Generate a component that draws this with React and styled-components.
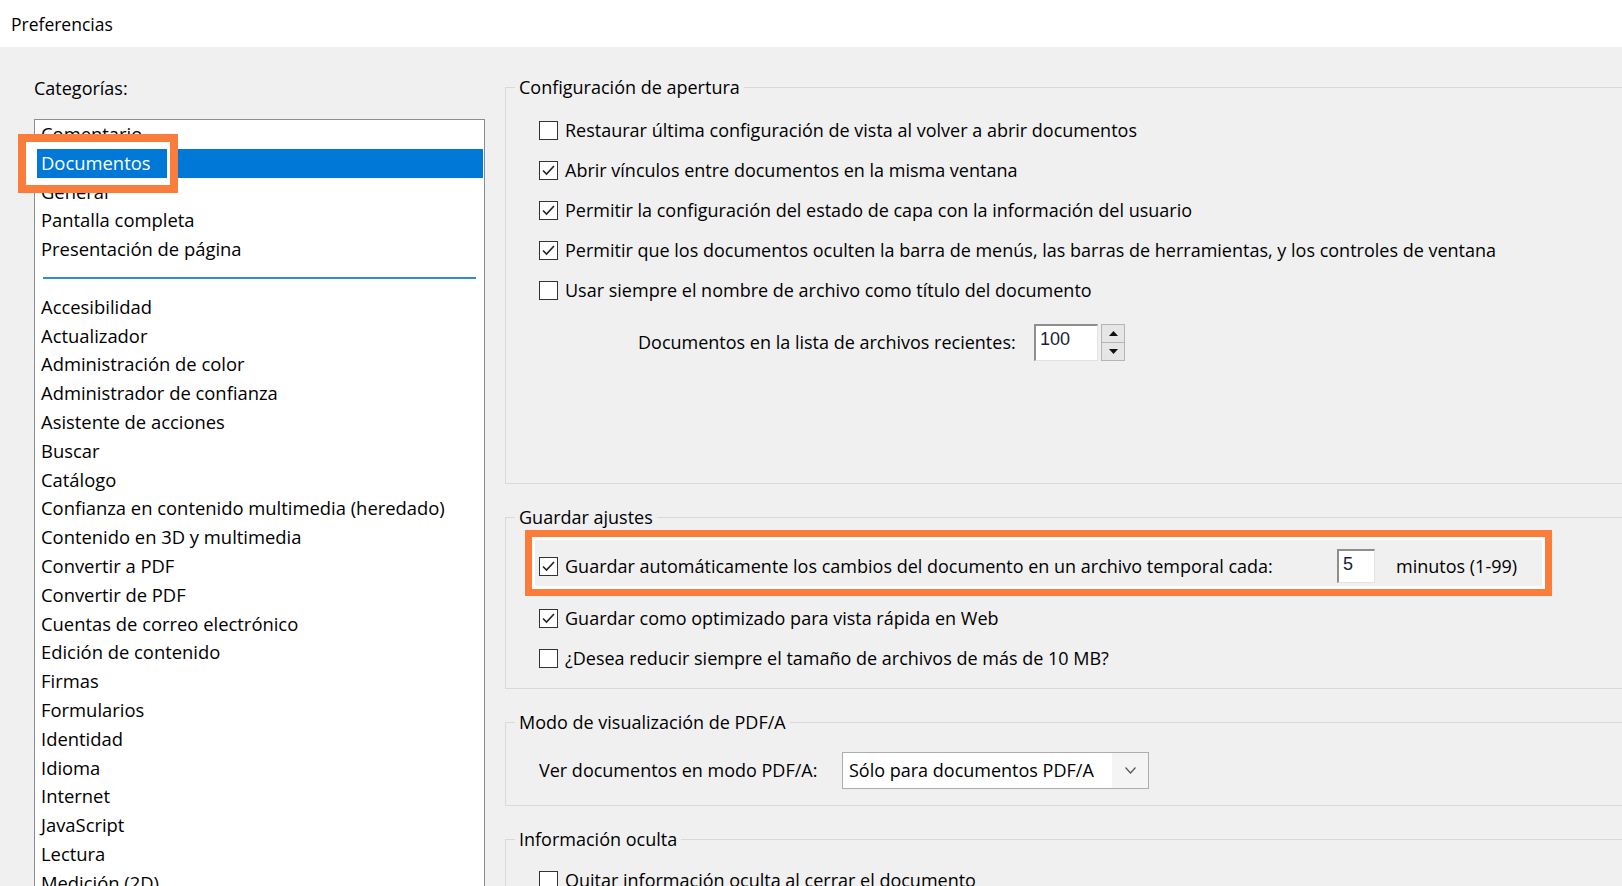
import React from "react";
import styled, { createGlobalStyle } from "styled-components";

const GlobalStyle = createGlobalStyle`
  html, body {
    margin: 0;
    padding: 0;
    overflow: hidden;
  }
  body {
    background: #f0f0f0;
    font-family: "Open Sans", "Noto Sans", sans-serif;
    color: #000;
  }
  * {
    box-sizing: border-box;
  }
`;

const ORANGE = "#fb7d3c";
const FONT_SIZE = "18px";

const Window = styled.div`
  width: 1622px;
  height: 886px;
  display: flex;
  flex-direction: column;
  overflow: hidden;
`;

const TitleBar = styled.div`
  height: 47px;
  flex-shrink: 0;
  background: #fff;
  display: flex;
  align-items: center;
  padding-left: 11px;
  font-size: 17.5px;
`;

const Body = styled.div`
  flex: 1;
  min-height: 0;
  display: grid;
  grid-template-columns: 451px 1fr;
  column-gap: 20px;
  padding: 29px 0 0 34px;
`;

// Left: categories
const Sidebar = styled.div`
  display: flex;
  flex-direction: column;
`;

const SideLabel = styled.div`
  height: 22px;
  line-height: 22px;
  margin: 1px 0 20px;
  font-size: ${FONT_SIZE};
`;

const ListBox = styled.div`
  position: relative;
  height: 800px;
  background: #fff;
  border: 1px solid #8a8d92;
  padding: 0 1px;
`;

const ListItem = styled.div`
  height: 28.8px;
  line-height: 28.8px;
  padding-left: 5px;
  font-size: 18.4px;
  white-space: nowrap;
  background: ${(p) => (p.$selected ? "#0078d7" : "transparent")};
  color: ${(p) => (p.$selected ? "#fff" : "#000")};
`;

const ListSeparator = styled.div`
  height: 28.8px;
  display: flex;
  align-items: center;
  padding: 0 7px;

  &::after {
    content: "";
    flex: 1;
    height: 2px;
    background: #2f8ad8;
  }
`;

const ListMark = styled.div`
  position: absolute;
  left: -17px;
  top: 14px;
  width: 160px;
  height: 59px;
  border: 8px solid ${ORANGE};
  box-shadow: inset 0 0 0 3px #fff, inset 11px 0 0 #fff;
  pointer-events: none;
`;

// Right: groups
const Panel = styled.div`
  display: flex;
  flex-direction: column;
  gap: 22px;
`;

const Group = styled.fieldset`
  margin: 0;
  min-width: 0;
  border: 1px solid #d9d9d9;
  border-right: none;
  padding: ${(p) => p.$pt}px 0 ${(p) => p.$pb}px 0;
`;

const Legend = styled.legend`
  margin-left: 9px;
  padding: 0 4px;
  height: 22px;
  line-height: 22px;
  font-size: ${FONT_SIZE};
`;

const GroupBody = styled.div`
  padding-left: 33px;
`;

const Row = styled.div`
  height: 40px;
  display: flex;
  align-items: center;
  font-size: ${FONT_SIZE};
  white-space: nowrap;
  margin-top: ${(p) => p.$mt || 0}px;
  padding-left: ${(p) => p.$pl || 0}px;
`;

const Box = styled.span`
  width: 19px;
  height: 19px;
  flex-shrink: 0;
  margin-right: 7px;
  background: #fff;
  border: 1.5px solid #333;
  display: flex;
  align-items: center;
  justify-content: center;
`;

const Label = styled.span`
  display: inline-block;
  flex-shrink: 0;
  width: ${(p) => (p.$w ? `${p.$w}px` : "auto")};
`;

const MarkRow = styled.div`
  height: 66px;
  width: 1027px;
  margin: 2px 0 0 -14px;
  padding: 6px 0 0 7px;
  border: 7px solid ${ORANGE};
  box-shadow: inset 0 0 0 3px #fff;
  display: flex;
  align-items: center;
  font-size: ${FONT_SIZE};
  white-space: nowrap;
`;

const NumField = styled.div`
  width: ${(p) => p.$w}px;
  height: ${(p) => p.$h}px;
  flex-shrink: 0;
  background: #fff;
  border-top: 2px solid #8e8e8e;
  border-left: 2px solid #8e8e8e;
  border-right: 1px solid #e3e3e3;
  border-bottom: 1px solid #e3e3e3;
  padding-left: 4px;
  display: flex;
  align-items: flex-start;
  font-family: "Liberation Sans", Arial, sans-serif;
  font-size: 18px;
  line-height: 26px;
  color: #1c1c3a;
`;

const Spinner = styled.div`
  width: 24px;
  height: 37px;
  margin-left: 3px;
  display: flex;
  flex-direction: column;
  border: 1px solid #b5b5b5;
`;

const SpinButton = styled.div`
  flex: 1;
  background: #e6e6e6;
  display: flex;
  align-items: center;
  justify-content: center;

  & + & {
    border-top: 1px solid #b5b5b5;
  }
`;

const Units = styled.span`
  margin-left: 21px;
`;

const Select = styled.div`
  width: 307px;
  height: 37px;
  flex-shrink: 0;
  border: 1px solid #adadad;
  display: flex;
  background: #fff;
`;

const SelectValue = styled.div`
  flex: 1;
  padding-left: 6px;
  display: flex;
  align-items: center;
`;

const SelectArrow = styled.div`
  width: 36px;
  background: #f4f4f4;
  display: flex;
  align-items: center;
  justify-content: center;
`;

const Check = ({ checked }) => (
  <Box>
    {checked && (
      <svg width="15" height="15" viewBox="0 0 15 15">
        <polyline
          points="2,7.5 5.5,11 13,3"
          fill="none"
          stroke="#222"
          strokeWidth="1.6"
        />
      </svg>
    )}
  </Box>
);

const topCategories = [
  "Comentario",
  "Documentos",
  "General",
  "Pantalla completa",
  "Presentación de página",
];

const moreCategories = [
  "Accesibilidad",
  "Actualizador",
  "Administración de color",
  "Administrador de confianza",
  "Asistente de acciones",
  "Buscar",
  "Catálogo",
  "Confianza en contenido multimedia (heredado)",
  "Contenido en 3D y multimedia",
  "Convertir a PDF",
  "Convertir de PDF",
  "Cuentas de correo electrónico",
  "Edición de contenido",
  "Firmas",
  "Formularios",
  "Identidad",
  "Idioma",
  "Internet",
  "JavaScript",
  "Lectura",
  "Medición (2D)",
  "Medición (3D)",
];

const openOptions = [
  { label: "Restaurar última configuración de vista al volver a abrir documentos", checked: false },
  { label: "Abrir vínculos entre documentos en la misma ventana", checked: true },
  { label: "Permitir la configuración del estado de capa con la información del usuario", checked: true },
  {
    label:
      "Permitir que los documentos oculten la barra de menús, las barras de herramientas, y los controles de ventana",
    checked: true,
  },
  { label: "Usar siempre el nombre de archivo como título del documento", checked: false },
];

const App = () => {
  return (
    <Window>
      <GlobalStyle />
      <TitleBar>Preferencias</TitleBar>
      <Body>
        <Sidebar>
          <SideLabel>Categorías:</SideLabel>
          <ListBox>
            {topCategories.map((c) => (
              <ListItem key={c} $selected={c === "Documentos"}>
                {c}
              </ListItem>
            ))}
            <ListSeparator />
            {moreCategories.map((c) => (
              <ListItem key={c}>{c}</ListItem>
            ))}
            <ListMark />
          </ListBox>
        </Sidebar>

        <Panel>
          <Group $pt={12} $pb={121}>
            <Legend>Configuración de apertura</Legend>
            <GroupBody>
              {openOptions.map((o) => (
                <Row key={o.label}>
                  <Check checked={o.checked} />
                  {o.label}
                </Row>
              ))}
              <Row $mt={12} $pl={99}>
                <Label $w={396}>Documentos en la lista de archivos recientes:</Label>
                <NumField $w={64} $h={37}>100</NumField>
                <Spinner>
                  <SpinButton>
                    <svg width="9" height="5" viewBox="0 0 9 5">
                      <polygon points="0,5 4.5,0 9,5" fill="#111" />
                    </svg>
                  </SpinButton>
                  <SpinButton>
                    <svg width="9" height="5" viewBox="0 0 9 5">
                      <polygon points="0,0 4.5,5 9,0" fill="#111" />
                    </svg>
                  </SpinButton>
                </Spinner>
              </Row>
            </GroupBody>
          </Group>

          <Group $pt={0} $pb={10}>
            <Legend>Guardar ajustes</Legend>
            <GroupBody>
              <MarkRow>
                <Check checked />
                <Label $w={772}>
                  Guardar automáticamente los cambios del documento en un archivo temporal cada:
                </Label>
                <NumField $w={38} $h={34}>5</NumField>
                <Units>minutos (1-99)</Units>
              </MarkRow>
              <Row $mt={2}>
                <Check checked />
                Guardar como optimizado para vista rápida en Web
              </Row>
              <Row>
                <Check />
                ¿Desea reducir siempre el tamaño de archivos de más de 10 MB?
              </Row>
            </GroupBody>
          </Group>

          <Group $pt={17} $pb={15}>
            <Legend>Modo de visualización de PDF/A</Legend>
            <GroupBody>
              <Row>
                <Label $w={303}>Ver documentos en modo PDF/A:</Label>
                <Select>
                  <SelectValue>Sólo para documentos PDF/A</SelectValue>
                  <SelectArrow>
                    <svg width="11" height="7" viewBox="0 0 11 7">
                      <polyline
                        points="0.5,0.5 5.5,6 10.5,0.5"
                        fill="none"
                        stroke="#555"
                        strokeWidth="1.2"
                      />
                    </svg>
                  </SelectArrow>
                </Select>
              </Row>
            </GroupBody>
          </Group>

          <Group $pt={10} $pb={20}>
            <Legend>Información oculta</Legend>
            <GroupBody>
              <Row>
                <Check />
                Quitar información oculta al cerrar el documento
              </Row>
            </GroupBody>
          </Group>
        </Panel>
      </Body>
    </Window>
  );
};

export default App;
